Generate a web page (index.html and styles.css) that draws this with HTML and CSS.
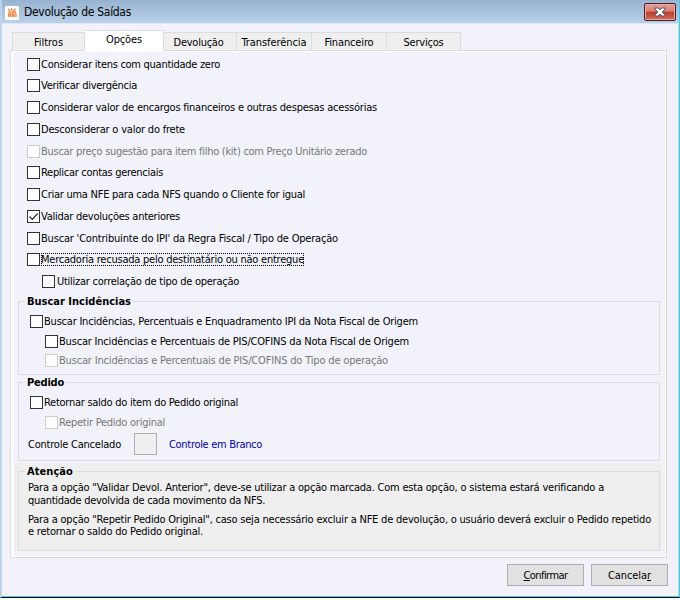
FILE: index.html
```
<!DOCTYPE html>
<html lang="pt-BR">
<head>
<meta charset="utf-8">
<title>Devolução de Saídas</title>
<link rel="stylesheet" href="styles.css">
</head>
<body>
<div class="window">
  <header class="titlebar">
    <svg class="app-icon" viewBox="0 0 14 14"><rect width="14" height="14" rx="1" fill="#fff"/><path d="M3 3l2 2M6 2.500l1.500 2M10.500 2.500l-2 3M3 7.500l3-2M6.500 6.500l4-1M3.500 11V9l2-1v3M7.500 11V7.500L9 9v2M11 11V8l-1-1.500" fill="none" stroke="#f47a38" stroke-width="1.300"/></svg>
    <span class="title" data-w="107">Devolução de Saídas</span>
    <div class="close"><svg viewBox="0 0 12 10"><path d="M1 1h3.200L6 3l1.800-2H11v1L8.200 5 11 8v1H7.800L6 7 4.200 9H1V8l2.800-3L1 2z" fill="#fff" stroke="#53596a" stroke-width="1"/></svg></div>
  </header>
  <nav class="tabs">
    <div class="tab first"><span data-w="29">Filtros</span></div>
    <div class="tab active"><span data-w="36">Opções</span></div>
    <div class="tab dev"><span data-w="50">Devolução</span></div>
    <div class="tab"><span data-w="65">Transferência</span></div>
    <div class="tab"><span data-w="49">Financeiro</span></div>
    <div class="tab last"><span data-w="40">Serviços</span></div>
  </nav>
  <main class="panel">
    <div class="options">
      <div class="row"><i class="box"></i><span data-w="179">Considerar itens com quantidade zero</span></div>
      <div class="row"><i class="box"></i><span data-w="96">Verificar divergência</span></div>
      <div class="row"><i class="box"></i><span data-w="336">Considerar valor de encargos financeiros e outras despesas acessórias</span></div>
      <div class="row"><i class="box"></i><span data-w="144">Desconsiderar o valor do frete</span></div>
      <div class="row off"><i class="box"></i><span data-w="326">Buscar preço sugestão para item filho (kit) com Preço Unitário zerado</span></div>
      <div class="row"><i class="box"></i><span data-w="122">Replicar contas gerenciais</span></div>
      <div class="row"><i class="box"></i><span data-w="264">Criar uma NFE para cada NFS quando o Cliente for igual</span></div>
      <div class="row"><i class="box"><svg viewBox="0 0 11 11"><path d="M1.500 5.500l2.800 2.800L9.700 2.500" fill="none" stroke="#333" stroke-width="1.300"/></svg></i><span data-w="139">Validar devoluções anteriores</span></div>
      <div class="row"><i class="box"></i><span data-w="297">Buscar 'Contribuinte do IPI' da Regra Fiscal / Tipo de Operação</span></div>
      <div class="row"><i class="box"></i><span class="focus" data-w="263">Mercadoria recusada pelo destinatário ou não entregue</span></div>
      <div class="row sub"><i class="box"></i><span data-w="182">Utilizar correlação de tipo de operação</span></div>
    </div>
    <section class="group incid">
      <h2><span data-w="104">Buscar Incidências</span></h2>
      <div class="row"><i class="box"></i><span data-w="374">Buscar Incidências, Percentuais e Enquadramento IPI da Nota Fiscal de Origem</span></div>
      <div class="row sub"><i class="box"></i><span data-w="350">Buscar Incidências e Percentuais de PIS/COFINS da Nota Fiscal de Origem</span></div>
      <div class="row sub off"><i class="box"></i><span data-w="329">Buscar Incidências e Percentuais de PIS/COFINS do Tipo de operação</span></div>
    </section>
    <section class="group pedido">
      <h2><span data-w="37">Pedido</span></h2>
      <div class="row"><i class="box"></i><span data-w="194">Retornar saldo do item do Pedido original</span></div>
      <div class="row sub off"><i class="box"></i><span data-w="106">Repetir Pedido original</span></div>
      <div class="control"><span data-w="93">Controle Cancelado</span><i class="swatch"></i><span class="blue" data-w="93">Controle em Branco</span></div>
    </section>
    <div class="notice">
      <section class="group aten">
        <h2><span data-w="46">Atenção</span></h2>
        <p><span data-w="576">Para a opção "Validar Devol. Anterior", deve-se utilizar a opção marcada. Com esta opção, o sistema estará verificando a</span><br><span data-w="237">quantidade devolvida de cada movimento da NFS.</span></p>
        <p><span data-w="623">Para a opção "Repetir Pedido Original", caso seja necessário excluir a NFE de devolução, o usuário deverá excluir o Pedido repetido</span><br><span data-w="175">e retornar o saldo do Pedido original.</span></p>
      </section>
    </div>
  </main>
  <footer class="actions">
    <div class="button"><span data-w="44"><u>C</u>onfirmar</span></div>
    <div class="button"><span data-w="43">Cancela<u>r</u></span></div>
  </footer>
</div>
<script src="fit.js"></script>
</body>
</html>
```
FILE: fit.js
```
// Adjusts the tracking of each label to its nominal width in pixels.
document.querySelectorAll('[data-w]').forEach(function (el) {
  var range = document.createRange();
  range.selectNodeContents(el);
  var natural = range.getBoundingClientRect().width;
  var target = Number(el.dataset.w);
  el.style.letterSpacing = ((target - natural) / el.textContent.length).toFixed(4) + 'px';
});
```
FILE: styles.css
```
* { box-sizing: border-box; }
body {
  margin: 0;
  background: #fff;
  color: #000;
  font: 11px/13px "DejaVu Sans Condensed", "DejaVu Sans", sans-serif;
  font-stretch: condensed;
}
span { white-space: nowrap; }
.window {
  width: 680px;
  height: 598px;
  background: #f2f3fa;
  border-left: 2px solid #bdd3e9;
  border-right: 1px solid #45cbe8;
  border-bottom: 1px solid #000;
  box-shadow: inset 0 -1px #35d3f4, inset -1px 0 #b8d9ee;
  overflow: hidden;
}
.titlebar {
  height: 24px;
  display: flex;
  align-items: center;
  background: linear-gradient(#98b3d1, #b9d1e8);
  padding: 2px 3px 0;
  border-bottom: 1px solid #dce8f4;
}
.app-icon { width: 14px; height: 14px; }
.title { margin-left: 5px; font-size: 12px; }
.close {
  margin-left: auto;
  width: 32px;
  height: 18px;
  margin-top: -1px;
  border: 1px solid #501d2a;
  border-radius: 2px;
  box-shadow: inset 0 0 0 1px #e5aaa2;
  background: linear-gradient(#e2a196 0, #d88175 45%, #bc3b28 50%, #d1705c 100%);
  display: flex;
  align-items: center;
  justify-content: center;
}
.close svg { width: 12px; height: 10px; }
.tabs { display: flex; align-items: flex-end; height: 26px; padding-left: 10px; }
.tab {
  width: 75px;
  height: 18px;
  background: #efefef;
  border: 1px solid #ddd;
  border-width: 1px 1px 0 0;
  display: flex;
  justify-content: center;
  align-items: center;
  padding-top: 1px;
}
.tab.first { width: 73px; border-left-width: 1px; }
.tab.active { width: 79px; height: 21px; margin-bottom: -1px; position: relative; background: #fff; padding: 0 0 3px; }
.tab.dev { width: 73px; padding-right: 3px; }
.tab.last { width: 74px; }
.panel {
  margin-left: 8px;
  width: 657px;
  height: 508px;
  border: 1px solid #ddd;
  box-shadow: inset 3px 0 #fff, inset -1px 0 #fff, inset 0 -1px #fff, inset 0 1px #fff;
  padding: 2px 6px 0 7px;
}
.options { padding-left: 9px; height: 248px; padding-top: 0.250px; }
.row { display: flex; align-items: center; height: 21.75px; }
.box {
  width: 13px;
  height: 13px;
  border: 1px solid #333;
  background: #fff;
  margin-right: 1px;
  flex: none;
}
.box svg { display: block; width: 11px; height: 11px; }
.off { color: #777; }
.off .box { border-color: #ccc; }
.sub { padding-left: 15px; }
.sub .box { margin-right: 2px; }
.focus { outline: 1px dotted #000; outline-offset: -1px; }
.group { border: 1px solid #ddd; width: 642px; }
.group h2 {
  margin: -7px 0 0 6px;
  width: max-content;
  padding: 0 2px;
  background: #f2f3fa;
  font: bold 11px/13px "DejaVu Sans Condensed", "DejaVu Sans", sans-serif;
}
.group .row { padding-left: 11px; height: 19.7px; }
.group .row.sub { padding-left: 26px; }
.group .sub .box { margin-right: 1px; }
.incid { height: 74px; }
.incid h2, .pedido h2 { margin-bottom: 3.500px; }
.pedido { height: 79px; margin-top: 7px; }
.control { display: flex; align-items: center; padding-left: 9px; height: 23px; margin-top: 1px; }
.swatch { width: 23px; height: 22px; margin: 0 12px 0 13px; background: #efefef; border: 1px solid #adadb0; }
.blue { color: #0000a8; }
.notice { margin: 2px -2px 0 -3px; padding: 8px 2px 0 3px; background: linear-gradient(#efefef, #efefef) 0 0 / 100% 88px no-repeat; }
.aten { height: 80px; background: #efefef; }
.group.aten h2 { background: #efefef; margin-bottom: 4px; }
.aten p { margin: 0 0 6px 9px; line-height: 12.750px; }
.actions { display: flex; gap: 7px; margin: 6px 0 0 505px; }
.button {
  width: 77px;
  height: 22px;
  border: 1px solid #adadad;
  background: #e1e1e1;
  display: flex;
  align-items: center;
  justify-content: center;
}
```
